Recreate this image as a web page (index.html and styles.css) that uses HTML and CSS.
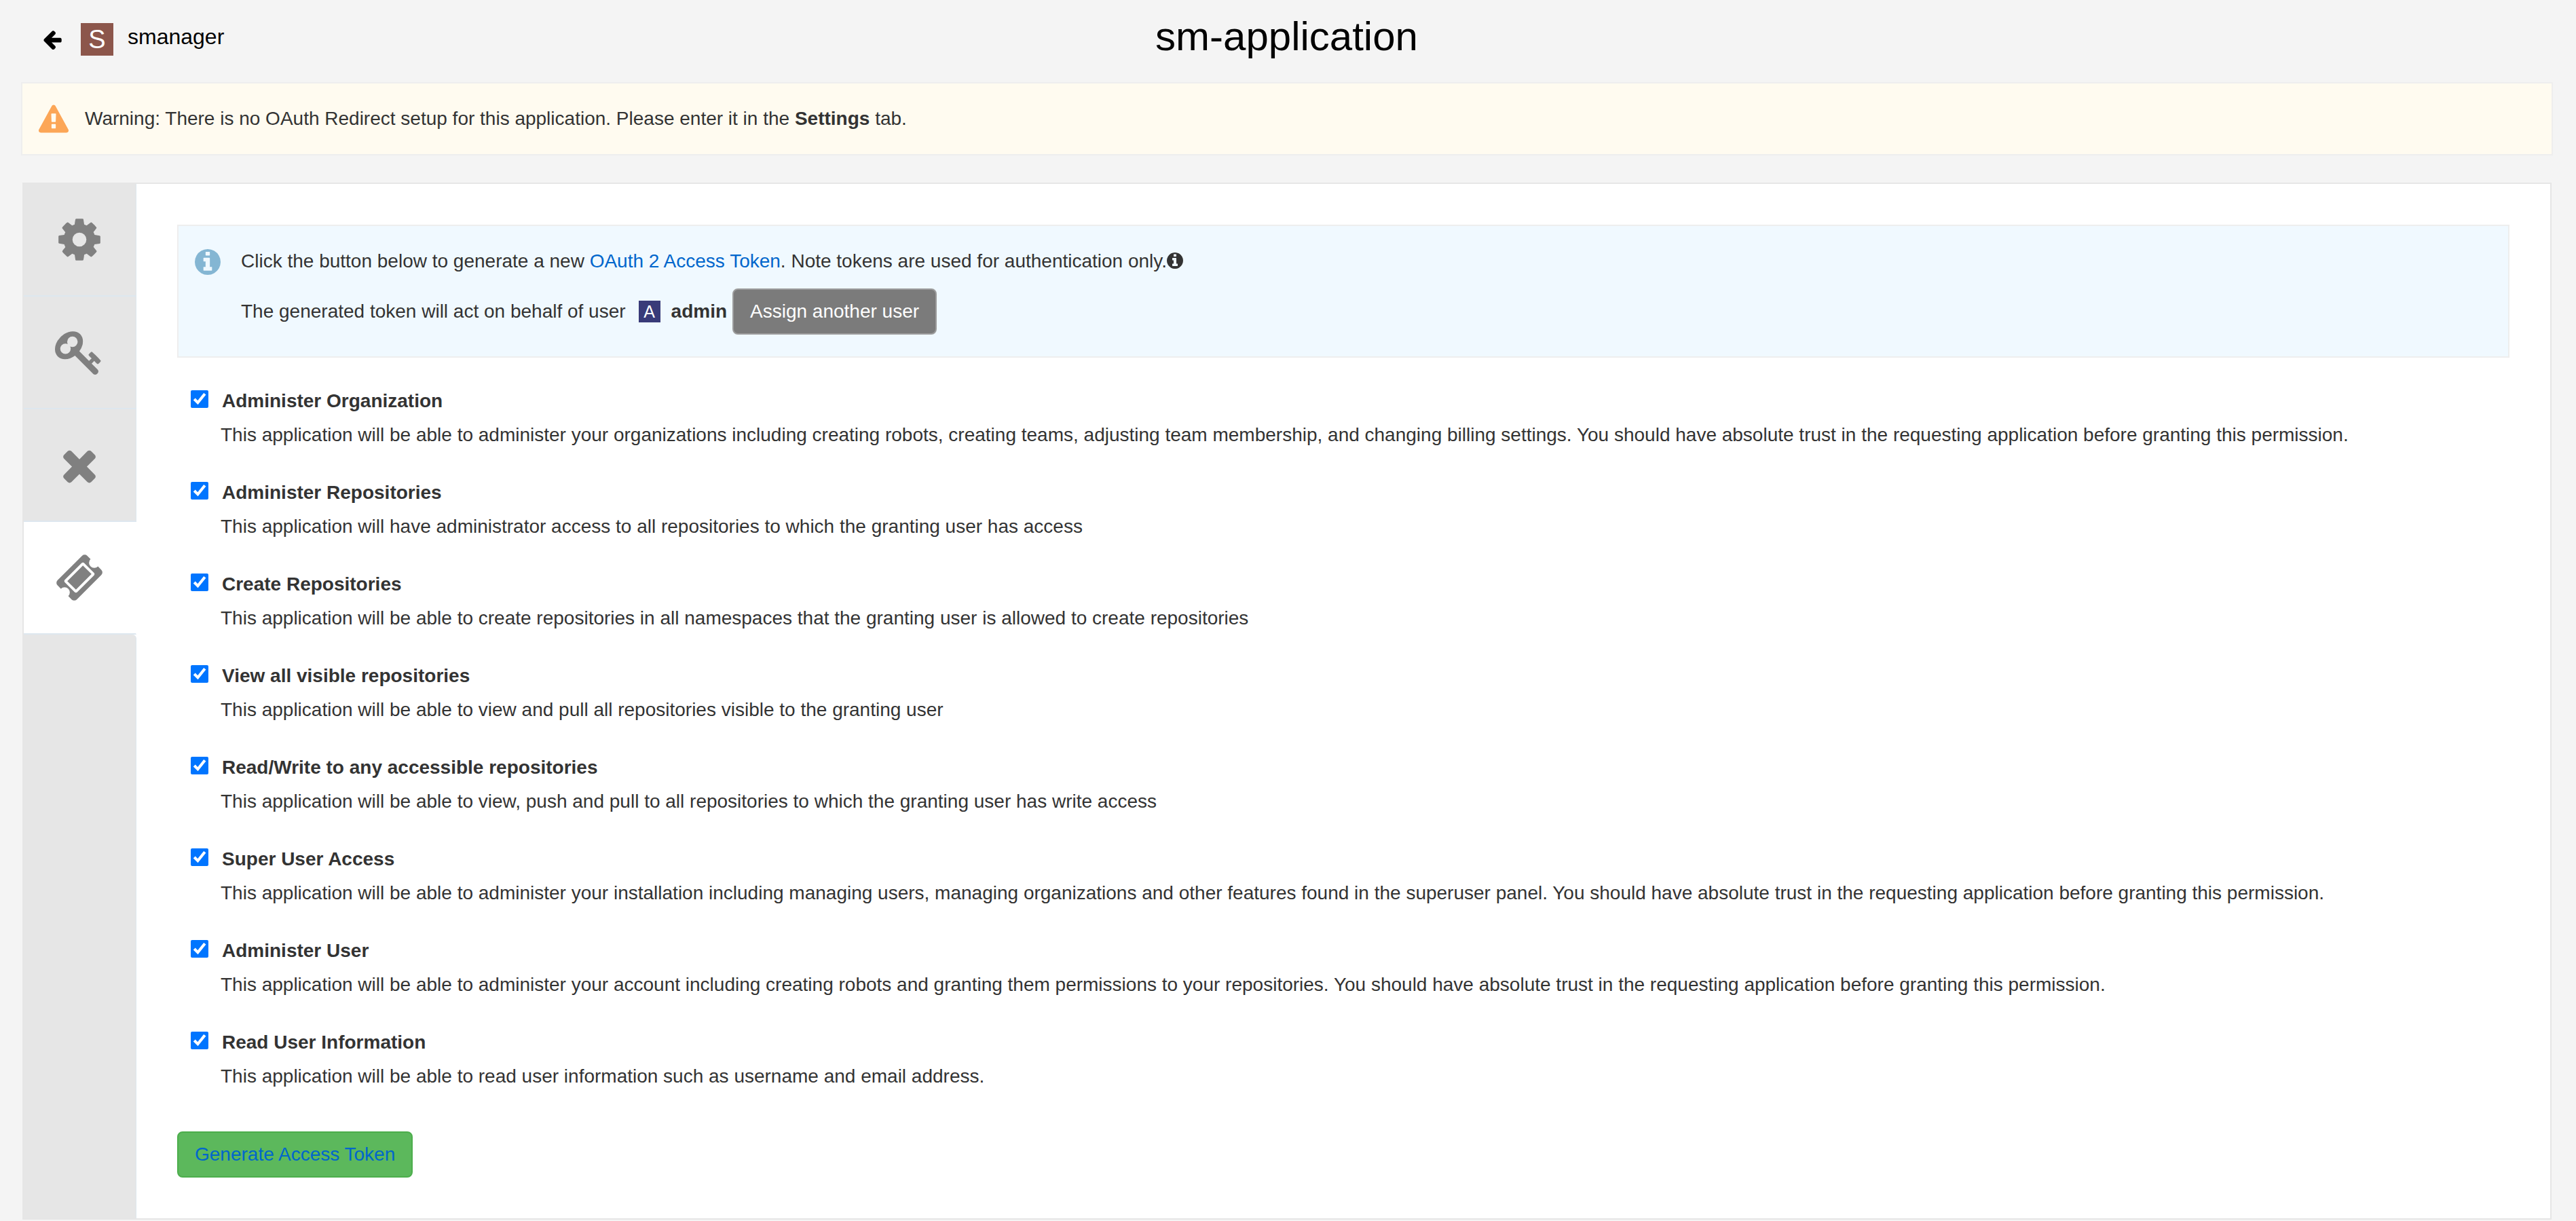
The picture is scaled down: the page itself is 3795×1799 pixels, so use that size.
FILE: index.html
```html
<!DOCTYPE html>
<html lang="en">
<head>
<meta charset="utf-8">
<meta name="viewport" content="width=device-width, initial-scale=1">
<title>sm-application</title>
<link rel="stylesheet" href="styles.css">
</head>
<body>
<header class="page-header">
  <a class="back-link" href="#">
    <svg class="back-icon" viewBox="0 0 1792 1792" aria-hidden="true"><path d="M1664 896v128q0 53-32.5 90.5t-84.5 37.5h-704l293 294q38 36 38 90t-38 90l-75 76q-37 37-90 37-52 0-91-37l-651-652q-37-37-37-90 0-52 37-91l651-650q38-38 91-38 52 0 90 38l75 74q38 38 38 91t-38 91l-293 293h704q52 0 84.5 37.5t32.5 90.5z"/></svg>
    <span class="avatar avatar-org">S</span>
    <span class="org-name">smanager</span>
  </a>
  <h1 class="page-title">sm-application</h1>
</header>
<main class="page-main">
  <div class="alert alert-warning">
    <svg class="warning-icon" viewBox="0 0 1792 1664" aria-hidden="true"><path d="M1024 1375v-190q0-14-9.5-23.5t-22.5-9.5h-192q-13 0-22.5 9.5t-9.5 23.5v190q0 14 9.5 23.5t22.5 9.5h192q13 0 22.5-9.5t9.5-23.5zm-2-374l18-459q0-12-10-19-13-11-24-11h-220q-11 0-24 11-10 7-10 21l17 457q0 10 10 16.5t24 6.5h185q14 0 23.5-6.5t10.5-16.5zm-14-934l768 1408q35 63-2 126-17 29-46.5 46t-63.5 17h-1536q-34 0-63.5-17t-46.5-46q-37-63-2-126l768-1408q17-31 47-49t65-18 65 18 47 49z"/></svg>
    <p class="alert-text">Warning: There is no OAuth Redirect setup for this application. Please enter it in the <strong>Settings</strong> tab.</p>
  </div>
  <div class="panel">
    <nav class="tabs" aria-label="Application sections">
      <a class="tab" href="#" aria-label="Settings"><svg class="tab-icon" viewBox="0 0 1792 1792"><path d="M1152 896q0-106-75-181t-181-75-181 75-75 181 75 181 181 75 181-75 75-181zm512-109v222q0 12-8 23t-20 13l-185 28q-19 54-39 91 35 50 107 138 10 12 10 25t-9 23q-27 37-99 108t-94 71q-12 0-26-9l-138-108q-44 23-91 38-16 136-29 186-7 28-36 28h-222q-14 0-24.500-8.500t-11.500-21.500l-28-184q-49-16-90-37l-141 107q-10 9-25 9-14 0-25-11-126-114-165-168-7-10-7-23 0-12 8-23 15-21 51-66.500t54-70.500q-27-50-41-99l-183-27q-13-2-21-12.500t-8-23.500v-222q0-12 8-23t19-13l186-28q14-46 39-92-40-57-107-138-10-12-10-24 0-10 9-23 26-36 98.500-107.500t94.500-71.500q13 0 26 10l138 107q44-23 91-38 16-136 29-186 7-28 36-28h222q14 0 24.500 8.500t11.500 21.500l28 184q49 16 90 37l142-107q9-9 24-9 13 0 25 10 129 119 165 170 7 8 7 22 0 12-8 23-15 21-51 66.500t-54 70.500q26 50 41 98l183 28q13 2 21 12.500t8 23.500z"/></svg></a>
      <a class="tab" href="#" aria-label="OAuth information"><svg class="tab-icon" viewBox="0 0 1792 1792"><path d="M832 512q0-80-56-136t-136-56-136 56-56 136q0 42 19 83-41-19-83-19-80 0-136 56t-56 136 56 136 136 56 136-56 56-136q0-42-19-83 41 19 83 19 80 0 136-56t56-136zm851 704q0 17-49 66t-66 49q-9 0-28.500-16t-36.500-33-38.500-40-24.500-26l-96 96 220 220q28 28 28 68 0 42-39 81t-81 39q-40 0-68-28l-671-671q-176 131-365 131-163 0-265.500-102.500t-102.500-265.500q0-160 95-313t248-248 313-95q163 0 265.500 102.500t102.500 265.500q0 189-131 365l355 355 96-96q-3-3-26-24.500t-40-38.500-33-36.500-16-28.500q0-17 49-66t66-49q13 0 23 10 6 6 46 44.500t82 79.500 86.500 86 73 78 28.500 41z"/></svg></a>
      <a class="tab" href="#" aria-label="Delete application"><svg class="tab-icon" viewBox="0 0 1792 1792"><path d="M1490 1322q0 40-28 68l-136 136q-28 28-68 28t-68-28l-294-294-294 294q-28 28-68 28t-68-28l-136-136q-28-28-28-68t28-68l294-294-294-294q-28-28-28-68t28-68l136-136q28-28 68-28t68 28l294 294 294-294q28-28 68-28t68 28l136 136q28 28 28 68t-28 68l-294 294 294 294q28 28 28 68z"/></svg></a>
      <a class="tab tab-active" href="#" aria-label="Generate token" aria-current="page"><svg class="tab-icon" viewBox="0 0 1792 1792"><path d="M1024 452l316 316-572 572-316-316zm-211 979l618-618q19-19 19-45t-19-45l-362-362q-18-18-45-18t-45 18l-618 618q-19 19-19 45t19 45l362 362q18 18 45 18t45-18zm889-637l-907 908q-37 37-90.500 37t-90.500-37l-126-126q56-56 56-136t-56-136-136-56-136 56l-125-126q-37-37-37-90.500t37-90.500l907-906q37-37 90.500-37t90.500 37l125 125q-56 56-56 136t56 136 136 56 136-56l126 125q37 37 37 90.500t-37 90.500z"/></svg></a>
    </nav>
    <form class="content">
      <div class="alert alert-info">
        <svg class="info-icon" viewBox="128 128 1536 1536" aria-hidden="true"><path d="M1152 1376v-160q0-14-9-23t-23-9h-96v-512q0-14-9-23t-23-9h-320q-14 0-23 9t-9 23v160q0 14 9 23t23 9h96v320h-96q-14 0-23 9t-9 23v160q0 14 9 23t23 9h448q14 0 23-9t9-23zm-128-896v-160q0-14-9-23t-23-9h-192q-14 0-23 9t-9 23v160q0 14 9 23t23 9h192q14 0 23-9t9-23zm640 416q0 209-103 385.500t-279.500 279.500-385.500 103-385.500-103-279.500-279.500-103-385.500 103-385.500 279.500-279.500 385.500-103 385.500 103 279.500 279.500 103 385.500z"/></svg>
        <div class="info-body">
          <p class="info-line">Click the button below to generate a new <a class="link" href="#">OAuth 2 Access Token</a>. Note tokens are used for authentication only.<svg class="hint-icon" viewBox="128 128 1536 1536" aria-hidden="true"><path d="M1152 1376v-160q0-14-9-23t-23-9h-96v-512q0-14-9-23t-23-9h-320q-14 0-23 9t-9 23v160q0 14 9 23t23 9h96v320h-96q-14 0-23 9t-9 23v160q0 14 9 23t23 9h448q14 0 23-9t9-23zm-128-896v-160q0-14-9-23t-23-9h-192q-14 0-23 9t-9 23v160q0 14 9 23t23 9h192q14 0 23-9t9-23zm640 416q0 209-103 385.500t-279.500 279.500-385.500 103-385.500-103-279.500-279.500-103-385.500 103-385.500 279.500-279.500 385.500-103 385.500 103 279.500 279.500 103 385.500z"/></svg></p>
          <div class="user-line">
            <span>The generated token will act on behalf of user</span>
            <span class="avatar avatar-user">A</span>
            <strong class="user-name">admin</strong>
            <button class="btn btn-assign" type="button">Assign another user</button>
          </div>
        </div>
      </div>
      <div class="scopes">
        <div class="scope">
          <input class="scope-check" type="checkbox" id="org-admin" checked>
          <label class="scope-name" for="org-admin">Administer Organization</label>
          <p class="scope-text">This application will be able to administer your organizations including creating robots, creating teams, adjusting team membership, and changing billing settings. You should have absolute trust in the requesting application before granting this permission.</p>
        </div>
        <div class="scope">
          <input class="scope-check" type="checkbox" id="repo-admin" checked>
          <label class="scope-name" for="repo-admin">Administer Repositories</label>
          <p class="scope-text">This application will have administrator access to all repositories to which the granting user has access</p>
        </div>
        <div class="scope">
          <input class="scope-check" type="checkbox" id="repo-create" checked>
          <label class="scope-name" for="repo-create">Create Repositories</label>
          <p class="scope-text">This application will be able to create repositories in all namespaces that the granting user is allowed to create repositories</p>
        </div>
        <div class="scope">
          <input class="scope-check" type="checkbox" id="repo-read" checked>
          <label class="scope-name" for="repo-read">View all visible repositories</label>
          <p class="scope-text">This application will be able to view and pull all repositories visible to the granting user</p>
        </div>
        <div class="scope">
          <input class="scope-check" type="checkbox" id="repo-write" checked>
          <label class="scope-name" for="repo-write">Read/Write to any accessible repositories</label>
          <p class="scope-text">This application will be able to view, push and pull to all repositories to which the granting user has write access</p>
        </div>
        <div class="scope">
          <input class="scope-check" type="checkbox" id="super-user" checked>
          <label class="scope-name" for="super-user">Super User Access</label>
          <p class="scope-text">This application will be able to administer your installation including managing users, managing organizations and other features found in the superuser panel. You should have absolute trust in the requesting application before granting this permission.</p>
        </div>
        <div class="scope">
          <input class="scope-check" type="checkbox" id="user-admin" checked>
          <label class="scope-name" for="user-admin">Administer User</label>
          <p class="scope-text">This application will be able to administer your account including creating robots and granting them permissions to your repositories. You should have absolute trust in the requesting application before granting this permission.</p>
        </div>
        <div class="scope">
          <input class="scope-check" type="checkbox" id="user-read" checked>
          <label class="scope-name" for="user-read">Read User Information</label>
          <p class="scope-text">This application will be able to read user information such as username and email address.</p>
        </div>
      </div>
      <button class="btn btn-generate" type="button">Generate Access Token</button>
    </form>
  </div>
</main>
</body>
</html>
```
FILE: styles.css
```css
* {
  box-sizing: border-box;
}

body {
  margin: 0;
  background: #f4f4f4;
  color: #333;
  font-family: "Liberation Sans", Arial, sans-serif;
  font-size: 28px;
  line-height: 40px;
}

p {
  margin: 0;
}

svg {
  display: block;
  flex: none;
  fill: currentColor;
}

/* Header */
.page-header {
  display: grid;
  grid-template-columns: 1fr auto 1fr;
  align-items: start;
  padding: 34px 4px 0 0;
  color: #000;
}

.back-link {
  display: flex;
  align-items: center;
  margin-left: 61px;
  color: #000;
  text-decoration: none;
}

.back-icon {
  width: 32px;
  height: 32px;
  margin-right: 26px;
}

.avatar {
  display: flex;
  flex: none;
  align-items: center;
  justify-content: center;
  color: #fff;
}

.avatar-org {
  width: 48px;
  height: 48px;
  margin-right: 21px;
  background: #8c564b;
  font-size: 38px;
}

.org-name {
  align-self: flex-start;
  font-size: 32px;
}

.page-title {
  margin: 0;
  font-size: 60px;
  font-weight: 400;
}

/* Alerts */
.page-main {
  padding: 39px 34px 2px 31px;
}

.alert {
  display: flex;
  border: 2px solid #eee;
}

.alert-warning {
  align-items: center;
  gap: 24px;
  padding: 31px 24px;
  background: #fffbf0;
}

.warning-icon {
  width: 44px;
  height: 42px;
  color: #fca657;
}

.alert-info {
  gap: 30px;
  padding: 32px 24px;
  background: #f0f9ff;
}

.info-icon {
  width: 38px;
  height: 38px;
  margin-top: 2px;
  color: #84b6d3;
}

.info-body {
  display: grid;
  gap: 20px;
}

.hint-icon {
  display: inline-block;
  width: 24px;
  height: 24px;
  vertical-align: -2px;
}

.link {
  color: #0066cc;
  text-decoration: none;
}

.user-line {
  display: flex;
  align-items: center;
}

.avatar-user {
  width: 32px;
  height: 32px;
  margin: 0 16px 0 19px;
  background: #393b79;
  font-size: 25px;
}

.user-name {
  margin-right: 8px;
}

/* Panel with side tabs */
.panel {
  display: flex;
  margin: 40px 2px 0;
  border: 2px solid #e6e6e6;
  background: #fff;
}

.tabs {
  display: flex;
  flex: none;
  flex-direction: column;
  width: 166px;
}

.tabs::after {
  flex: 1;
  border-right: 1px solid #dde7ef;
  border-top-right-radius: 6px;
  background: #e6e6e6;
  content: "";
}

.tab {
  display: flex;
  align-items: center;
  justify-content: center;
  height: 166px;
  padding-right: 1px;
  border-right: 1px solid #dde7ef;
  border-bottom: 2px solid #dde7ef;
  background: #e6e6e6;
  color: #808080;
}

.tab-active {
  border-right-color: #fff;
  background: #fff;
}

.tab-icon {
  width: 72px;
  height: 72px;
}

.content {
  flex: 1;
  min-width: 0;
  padding: 60px;
}

/* Scopes */
.scopes {
  display: grid;
  gap: 45px;
  margin: 44px 0 61px;
}

.scope {
  display: grid;
  grid-template-columns: 26px 1fr;
  gap: 10px 20px;
  padding-left: 20px;
}

.scope-check {
  width: 26px;
  height: 26px;
  margin: 4px 0 0;
  accent-color: #0075ff;
}

.scope-name {
  justify-self: start;
  font-weight: 700;
}

.scope-text {
  grid-column: 1 / -1;
  padding-left: 44px;
}

/* Buttons */
.btn {
  display: block;
  padding: 12px 24px;
  border: 2px solid;
  border-radius: 8px;
  font: inherit;
  cursor: pointer;
}

.btn-assign {
  border-color: #9d9d9d;
  background: #7b7b7b;
  color: #fff;
}

.btn-generate {
  border-color: #4cae4c;
  background: #5cb85c;
  color: #0066cc;
}
```
